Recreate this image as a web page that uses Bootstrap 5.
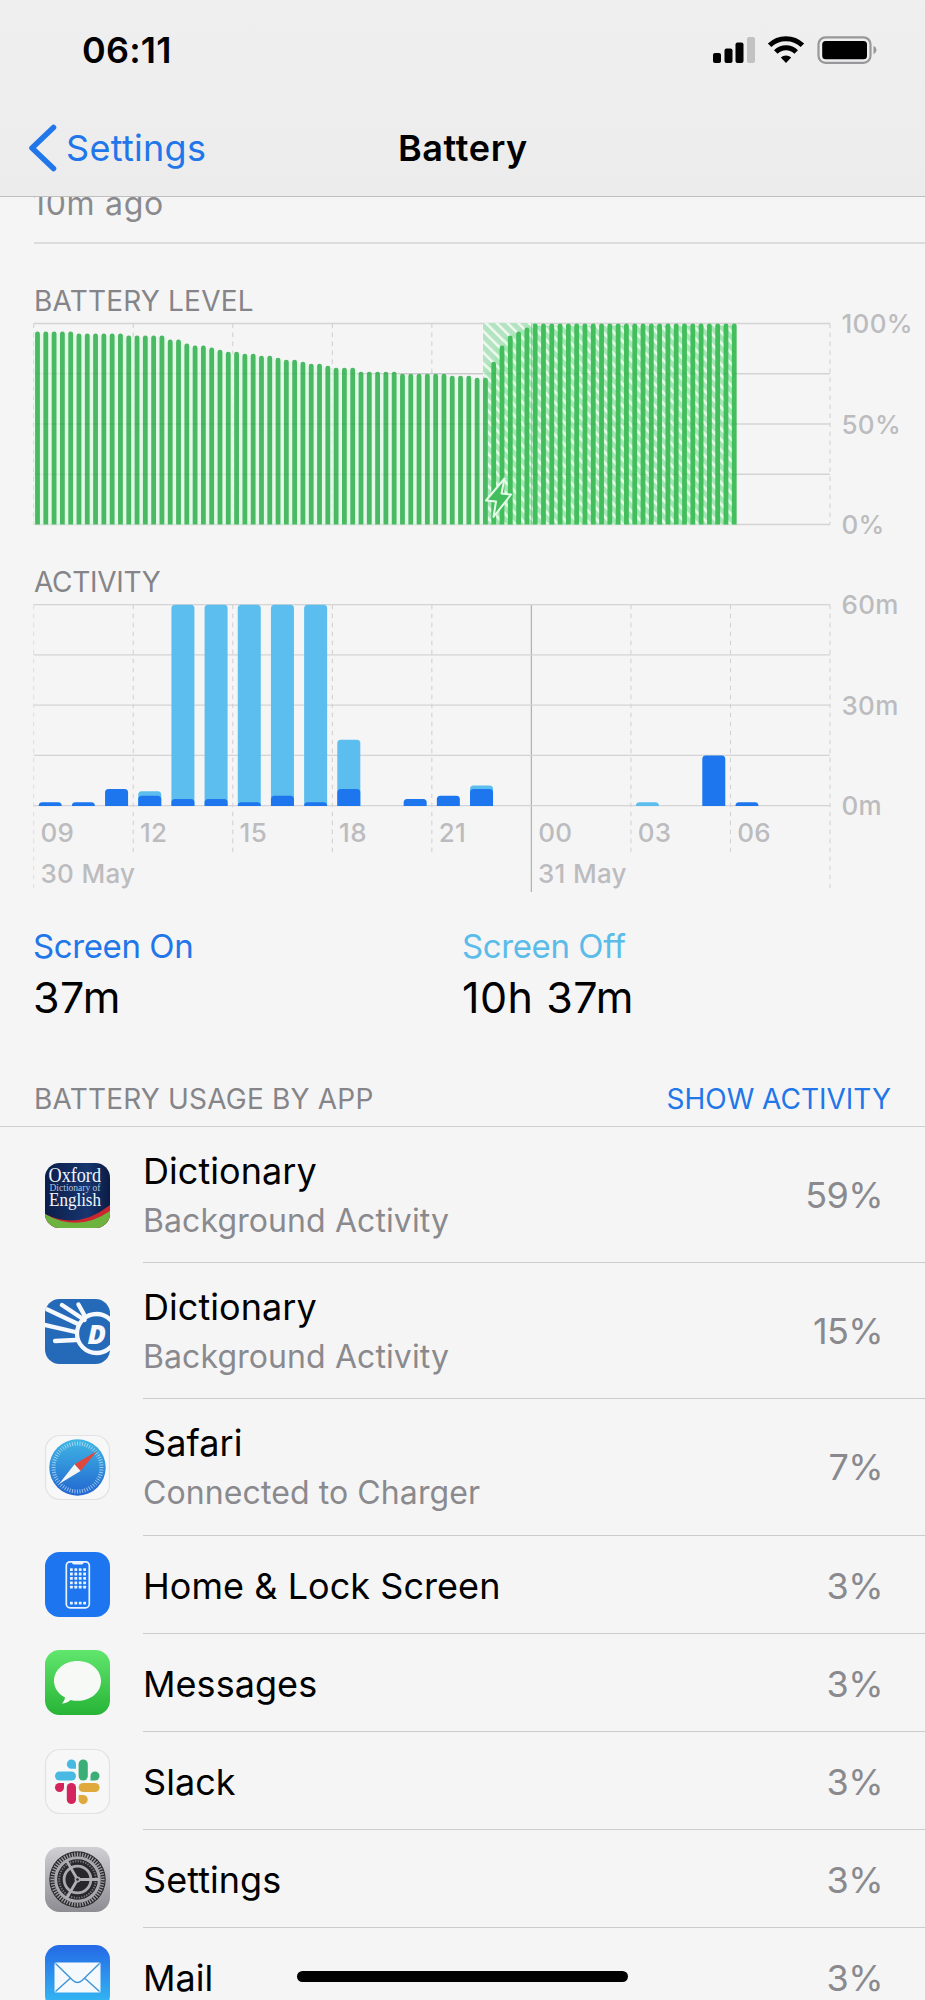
<!DOCTYPE html>
<html lang="en">
<head>
  <meta charset="UTF-8">
  <meta name="viewport" content="width=device-width, initial-scale=1.0">
  <title>Battery</title>

  <link href="https://cdn.jsdelivr.net/npm/bootstrap@5.3.3/dist/css/bootstrap.min.css" rel="stylesheet">

  <style>
    body {
      font-family: Inter, "Liberation Sans", sans-serif;
      background-color: #f5f5f5;
      color: #000;
      height: 2000px;
      overflow: hidden;
    }

    svg {
      display: block;
      flex-shrink: 0;
      overflow: visible;
    }

    /* Top bar */
    .top-bar {
      height: 197px;
      background: linear-gradient(#efeff0, #ececed);
      border-bottom: 1px solid #bfbfc1;
    }

    .status-bar {
      height: 100px;
      padding: 0 48px 0 82px;
    }

    .clock {
      font-size: 36px;
      font-weight: 600;
      letter-spacing: 0.2px;
      line-height: 1;
    }

    .title-bar {
      height: 96px;
      padding-left: 28px;
      font-size: 36px;
      line-height: 1;
    }

    .back-link {
      color: #2176ea;
      width: 370px;
      letter-spacing: 0.3px;
    }

    .back-link svg {
      margin-right: 8px;
    }

    .page-title {
      font-weight: 600;
      letter-spacing: 0.6px;
    }

    /* Last charge line, partly under the top bar */
    .last-charge {
      height: 47px;
      margin-left: 34px;
      overflow: hidden;
      border-bottom: 2px solid #dcdcdd;
      color: #8a8a8e;
      font-size: 32px;
      line-height: 1;
    }

    .last-charge span {
      display: block;
      margin: -9px 0 0 -2px;
      letter-spacing: 0.7px;
    }

    .section-label {
      padding-left: 34px;
      color: #858589;
      font-size: 28px;
      line-height: 34px;
    }

    .level-label {
      margin-top: 40px;
      letter-spacing: 0.2px;
    }

    .activity-label {
      letter-spacing: -0.3px;
    }

    .axis-text {
      font-size: 26px;
      font-weight: 500;
      letter-spacing: 0.3px;
      fill: #bcbcbf;
    }

    /* Totals */
    .totals {
      padding-left: 33px;
    }

    .total-on {
      width: 429px;
    }

    .total-name {
      font-size: 33px;
      line-height: 40px;
      letter-spacing: -0.4px;
    }

    .total-value {
      font-size: 43px;
      line-height: 52px;
      margin-top: 5px;
      letter-spacing: 0.5px;
    }

    .blue-text { color: #2176ea; }
    .sky-text { color: #5bbce9; }

    .usage-head {
      height: 45px;
      margin-top: 59px;
      padding: 0 34px;
      border-bottom: 1px solid #cfcfd1;
      font-size: 28px;
      line-height: 34px;
      color: #858589;
    }

    .usage-title {
      letter-spacing: 0.2px;
    }

    /* App list */
    .app-row {
      height: 98.2px;
      padding-left: 44.5px;
    }

    .app-row.tall {
      height: 136.2px;
    }

    .app-body {
      margin-left: 33.5px;
      padding: 3px 43px 0 0;
      border-bottom: 1px solid #cccccf;
    }

    .tall .app-body {
      padding-top: 1px;
    }

    .app-name {
      font-size: 36px;
      line-height: 44px;
      letter-spacing: 0.05px;
    }

    .app-note {
      font-size: 32px;
      line-height: 40px;
      margin: 8px 0 1px;
      color: #8a8a8e;
      letter-spacing: 0.1px;
    }

    .app-share {
      font-size: 36px;
      line-height: 44px;
      margin-right: -1px;
      color: #8a8a8e;
      letter-spacing: -0.6px;
    }

    .home-bar {
      position: absolute;
      left: 297px;
      top: 1971px;
      width: 331px;
      height: 11px;
      border-radius: 6px;
      background: #000;
    }
  </style>
</head>
<body>

  <!-- Status and title -->
  <header class="top-bar">
    <div class="status-bar d-flex align-items-center justify-content-between">
      <span class="clock">06:11</span>
      <svg width="164" height="28" viewBox="0 0 164 28">
        <rect x="0" y="17" width="8" height="10" rx="2"/>
        <rect x="11.5" y="12.5" width="8" height="14.5" rx="2"/>
        <rect x="22.5" y="6.5" width="8" height="20.5" rx="2"/>
        <rect x="34" y="1" width="8" height="26" rx="2" fill="#c2c2c4"/>
        <g fill="none" stroke="#000" stroke-width="5">
          <path d="M56.6 9.3a23.5 23.5 0 0 1 32.8 0"/>
          <path d="M62.8 16a14.4 14.4 0 0 1 20.4 0"/>
        </g>
        <path d="M73 27l-5.2-5.4a7.6 7.6 0 0 1 10.4 0z"/>
        <rect x="105.5" y="1.3" width="52" height="25.5" rx="7" fill="none" stroke="#98989a" stroke-width="2.2"/>
        <rect x="109.2" y="5" width="44.8" height="18.2" rx="3.5"/>
        <path d="M160.5 9.8q3 1.5 3 4.3t-3 4.3z" fill="#98989a"/>
      </svg>
    </div>
    <div class="title-bar d-flex align-items-center">
      <a class="back-link d-flex align-items-center text-decoration-none" href="#">
        <svg width="30" height="48" viewBox="0 0 30 48">
          <path d="M25.5 3.5L4 24l21.5 20.5" fill="none" stroke="#2176ea" stroke-width="5.5" stroke-linecap="round" stroke-linejoin="round"/>
        </svg>
        Settings
      </a>
      <span class="page-title">Battery</span>
    </div>
  </header>

  <div class="last-charge"><span>10m ago</span></div>

  <main>
    <div class="section-label level-label">BATTERY LEVEL</div>
    <svg id="level-chart" width="925" height="247" viewBox="0 318 925 247"></svg>

    <div class="section-label activity-label">ACTIVITY</div>
    <svg id="activity-chart" width="925" height="327" viewBox="0 599 925 327"></svg>

    <!-- Totals -->
    <div class="totals d-flex">
      <div class="total-on">
        <div class="total-name blue-text">Screen On</div>
        <div class="total-value">37m</div>
      </div>
      <div>
        <div class="total-name sky-text">Screen Off</div>
        <div class="total-value">10h 37m</div>
      </div>
    </div>

    <div class="usage-head d-flex justify-content-between">
      <span class="usage-title">BATTERY USAGE BY APP</span>
      <span class="blue-text">SHOW ACTIVITY</span>
    </div>

    <div id="app-list"></div>
  </main>

  <div class="home-bar"></div>

  <script src="https://cdn.jsdelivr.net/npm/bootstrap@5.3.3/dist/js/bootstrap.bundle.min.js"></script>

  <script>
    // Shared chart geometry
    const left = 33.7;
    const right = 830;
    const step = (right - left) / 8;

    function line(x1, y1, x2, y2, color, extra = '') {
      return `<line x1="${x1}" y1="${y1}" x2="${x2}" y2="${y2}" stroke="${color}" ${extra}/>`;
    }

    function label(x, y, text) {
      return `<text class="axis-text" x="${x}" y="${y}">${text}</text>`;
    }

    // Bar with only its top corners rounded
    function bar(x, top, bottom, w, r, color) {
      r = Math.min(r, bottom - top);
      return `<path fill="${color}" d="M${x} ${bottom}V${top + r}q0 ${-r} ${r} ${-r}h${w - 2 * r}q${r} 0 ${r} ${r}V${bottom}z"/>`;
    }

    // Battery level, one bar per 15 minutes: [value, how many bars]
    const levels = [
      [96, 5], [95, 6], [94, 5], [92, 2], [90, 1], [89, 2], [88, 1], [87, 1], [86, 2], [85, 2],
      [84, 2], [83, 1], [82, 2], [81, 1], [80, 2], [79, 1], [78, 3], [76, 5], [75, 6], [74, 3],
      [73, 2], [81, 1], [89, 1], [94, 1], [96, 1], [98, 1], [100, 25]
    ].flatMap(([value, count]) => Array(count).fill(value));

    function drawLevel() {
      const top = 323.5, bottom = 524.5, pitch = (right - left) / 96;
      let out = `
        <defs>
          <pattern id="hatch" width="7.6" height="7.6" patternUnits="userSpaceOnUse" patternTransform="rotate(-45)">
            <rect width="7.6" height="7.6" fill="#b4e3c1"/>
            <rect width="2.4" height="7.6" fill="#f1faf2"/>
          </pattern>
          <pattern id="hatch-deep" width="7.6" height="7.6" patternUnits="userSpaceOnUse" patternTransform="rotate(-45)">
            <rect width="7.6" height="7.6" fill="#a6e5b4"/>
            <rect width="2.8" height="7.6" fill="#e4fae7"/>
          </pattern>
        </defs>`;

      for (let i = 0; i <= 8; i++) {
        out += line(left + i * step, top, left + i * step, bottom, '#cfcfd1', 'stroke-dasharray="4.5 4.5"');
      }
      for (let i = 0; i <= 4; i++) {
        const y = top + i * (bottom - top) / 4;
        out += line(left, y, right, y, '#d4d4d6', 'stroke-width="1.3"');
      }

      out += `<rect x="483" y="${top - .5}" width="52" height="${bottom - top}" fill="url(#hatch)"/>`;
      levels.forEach((value, i) => {
        const y = bottom - value / 100 * (bottom - top);
        const fill = i < 55 ? '#e3f8e6' : 'url(#hatch-deep)';
        const x = left + (i < 55 ? i : i - .4) * pitch;
        const w = i === 84 ? pitch * .9 : pitch;
        out += `<rect x="${x}" y="${y + 2}" width="${w}" height="${bottom - y - 2}" fill="${fill}"/>`;
      });
      out += line(531.5, top, 531.5, bottom, '#6f9d78', 'stroke-opacity=".45"');
      levels.forEach((value, i) => {
        const y = bottom - value / 100 * (bottom - top);
        out += bar(left + 1.4 + i * pitch, y, bottom, 4.8, 2.3, i < 55 ? '#4ab963' : '#43be5c');
      });
      for (let i = 1; i < 4; i++) {
        const y = top + i * (bottom - top) / 4;
        out += line(left, y, 737, y, '#000', 'stroke-opacity=".06"');
      }

      out += '<path d="M504.5 478.5L486 500.5L496 501.5L493.5 517L511 494.5L501.5 493.5z" fill="#43be5c" stroke="#e6faea" stroke-width="2" stroke-linejoin="round"/>';
      out += label(841.5, 333, '100%') + label(841.5, 433.5, '50%') + label(841.5, 534, '0%');
      document.getElementById('level-chart').innerHTML = out;
    }

    // Minutes per hour slot: [slot, screen on, total]
    const activity = [
      [0, 1, 1], [1, 1, 1], [2, 5, 5], [3, 3, 4.3], [4, 2, 60], [5, 2, 60], [6, 1, 60], [7, 3, 60],
      [8, 1, 60], [9, 5, 19.7], [11, 2, 2], [12, 3, 3], [13, 5, 6], [18, 0, 1], [20, 15, 15], [21, 1, 1]
    ];

    function drawActivity() {
      const top = 604.7, bottom = 805.7, pitch = (right - left) / 24;
      let out = '';

      for (let i = 0; i <= 8; i++) {
        const x = left + i * step;
        const end = i === 0 || i === 8 ? 892 : 856;
        if (i === 5) {
          out += line(x, top, x, 892, '#b4b4b6', 'stroke-width="1.3"');
        } else {
          out += line(x, top, x, end, i === 0 ? '#dededf' : '#cfcfd1', 'stroke-dasharray="4.5 4.5"');
        }
      }
      for (let i = 0; i <= 4; i++) {
        const y = top + i * (bottom - top) / 4;
        out += line(left, y, right, y, '#d4d4d6', 'stroke-width="1.3"');
      }

      activity.forEach(([slot, on, total]) => {
        const x = left + 5 + slot * pitch;
        const y = minutes => bottom - Math.max(minutes / 60 * (bottom - top), 3.5);
        if (total > on) out += bar(x, y(total), bottom + .3, 23, 3.5, '#5bbeee');
        if (on > 0) out += bar(x, y(on), bottom + .3, 23, 3.5, '#1d76ee');
      });

      ['09', '12', '15', '18', '21', '00', '03', '06'].forEach((hour, i) => {
        out += label(left + i * step + 6.8, 842, hour);
      });
      out += label(40.5, 883, '30 May') + label(538, 883, '31 May');
      out += label(841.5, 614, '60m') + label(841.5, 714.5, '30m') + label(841.5, 815, '0m');
      document.getElementById('activity-chart').innerHTML = out;
    }

    // Ticks round the middle of a tile
    function ring(r, count, len, width, color) {
      let out = '';
      for (let i = 0; i < count; i++) {
        out += `<path d="M32.5 ${32.5 - r}v${len}" stroke="${color}" stroke-width="${width}" transform="rotate(${i * 360 / count} 32.5 32.5)"/>`;
      }
      return out;
    }

    function tile(fill, body, extra = '') {
      return `<svg width="65" height="65" viewBox="0 0 65 65">
        <clipPath id="tile-clip"><rect width="65" height="65" rx="14.5"/></clipPath>
        <g clip-path="url(#tile-clip)"><rect width="65" height="65" fill="${fill}"/>${body}</g>${extra}</svg>`;
    }

    const outline = '<rect x=".5" y=".5" width="64" height="64" rx="14.5" fill="none" stroke="#e2e2e4" stroke-width="1.2"/>';

    let dots = '';
    [0, 1, 2, 3, 4, 7.6].forEach(row => {
      for (let col = 0; col < 4; col++) {
        dots += `<rect x="${25 + col * 4.4}" y="${16.2 + row * 4.4}" width="2.8" height="2.8" rx=".4" fill="#e9f2ff"/>`;
      }
    });

    const icons = {
      oxford: tile('url(#navy)', `
        <defs><linearGradient id="navy" x1="0" x2="1"><stop stop-color="#0c1e49"/><stop offset=".65" stop-color="#17356f"/><stop offset="1" stop-color="#0a1c44"/></linearGradient></defs>
        <path d="M0 51Q33 67.500 65 42V65H0z" fill="#cb2630"/>
        <path d="M0 51Q33 70 65 48V65H0z" fill="#6cb43f"/>
        <g fill="#f3f5fa" font-family="Liberation Serif, serif" lengthAdjust="spacingAndGlyphs">
          <text x="3.5" y="18.5" font-size="20" textLength="52.5" lengthAdjust="spacingAndGlyphs">Oxford</text>
          <text x="4.5" y="28.3" font-size="10" textLength="51" fill="#b4c4de" lengthAdjust="spacingAndGlyphs">Dictionary of</text>
          <text x="4" y="43" font-size="19" textLength="52" lengthAdjust="spacingAndGlyphs">English</text>
        </g>`),
      rays: tile('#2569b9', `
        <g fill="none" stroke="#f5f8fc" stroke-width="4.3" stroke-linecap="round">
          <circle cx="51.5" cy="34.5" r="19.5"/>
          <path d="M10 42l21-1M-2 25.5L30.5 33M-2 8.5L34 25.5M17 6L39.5 21M33.5 5.5L39 15.5"/>
        </g>
        <text x="42.5" y="44.5" font-size="27" font-weight="800" font-style="italic" fill="#f5f8fc" font-family="Open Sans, sans-serif">D</text>`),
      safari: tile('#f8f8f9', `
        <defs><linearGradient id="sea" x2="0" y2="1"><stop stop-color="#3fb7e4"/><stop offset="1" stop-color="#2265d0"/></linearGradient></defs>
        <circle cx="32.5" cy="32.5" r="28.2" fill="url(#sea)"/>
        ${ring(26, 60, 4, .7, '#c9e4f6')}
        <path d="M52 16L29.5 29.3L35.5 36z" fill="#e0473f"/>
        <path d="M14 49L29.5 29.3L35.5 36z" fill="#f3f5f7"/>`, outline),
      home: tile('#1d76f0', `
        <rect x="21.3" y="9.8" width="23" height="46" rx="3.8" fill="none" stroke="#e9f2ff" stroke-width="1.7"/>
        <path d="M27 9.5h11.6v1q0 2-2 2h-7.6q-2 0-2-2z" fill="#e9f2ff"/>${dots}`),
      messages: tile('url(#lime)', `
        <defs><linearGradient id="lime" x2="0" y2="1"><stop stop-color="#61e66e"/><stop offset="1" stop-color="#27b436"/></linearGradient></defs>
        <path d="M32.5 11C19.500 11 9 19.600 9 31c0 7 4.300 13 11 16.500c-.3 2.500-1.300 4.300-3.300 6c3.800-.2 6.600-1.500 8.800-3.600c2.300.6 4.600.9 7 .9C45.500 50.800 56 42.400 56 31S45.500 11 32.500 11z" fill="#f7f9f7"/>`),
      slack: tile('#f7f7f8', `
        <g fill="#47b9e2"><rect x="10" y="22.5" width="21" height="9" rx="4.5"/><path d="M31 19.7h-4.500a4.600 4.600 0 1 1 4.500-4.600z"/></g>
        <g fill="#3bae78"><rect x="33.6" y="10.5" width="9.2" height="21" rx="4.6"/><path d="M45.500 31.500V27a4.500 4.500 0 1 1 4.500 4.500z"/></g>
        <g fill="#d3245e"><rect x="21.8" y="34" width="9.2" height="21" rx="4.6"/><path d="M19 34v4.500A4.500 4.500 0 1 1 14.500 34z"/></g>
        <g fill="#e0a93c"><rect x="33.6" y="34" width="21" height="9" rx="4.5"/><path d="M33.600 46h4.500a4.600 4.600 0 1 1-4.500 4.600z"/></g>`, outline),
      settings: tile('url(#steel)', `
        <defs><linearGradient id="steel" x2="0" y2="1"><stop stop-color="#cfcfd4"/><stop offset="1" stop-color="#8d8d93"/></linearGradient></defs>
        <circle cx="32.5" cy="32.5" r="28.2" fill="#28282b"/>
        ${ring(27.2, 60, 4, 1.3, '#a0a0a5')}
        <circle cx="32.5" cy="32.5" r="21.8" fill="none" stroke="#a9a9ae" stroke-width="3"/>
        <circle cx="32.5" cy="32.5" r="18.3" fill="none" stroke="#77777c" stroke-width="2" stroke-dasharray="1.3 1.3"/>
        <circle cx="32.5" cy="32.5" r="13.4" fill="none" stroke="#a9a9ae" stroke-width="2.8"/>
        <path d="M32.5 32.5H54M32.5 32.5L21.7 13.9M32.5 32.5L21.7 51.1" stroke="#b0b0b5" stroke-width="2.8"/>
        <circle cx="32.5" cy="32.5" r="3" fill="#aaaaaf"/><circle cx="32.5" cy="32.5" r="1.3" fill="#28282b"/>`),
      mail: tile('url(#azure)', `
        <defs><linearGradient id="azure" x2="0" y2="1"><stop stop-color="#2569e6"/><stop offset="1" stop-color="#35c0f4"/></linearGradient></defs>
        <rect x="9.5" y="17.5" width="46" height="30" rx="1.5" fill="#f5f9fc"/>
        <path d="M10.5 18.5L28 35.5q4.5 4 9 0L54.5 18.5M10.5 46.5L25.5 33M54.5 46.5L39.5 33" fill="none" stroke="#3f96da" stroke-width="1.5"/>`)
    };

    const apps = [
      { icon: 'oxford', name: 'Dictionary', note: 'Background Activity', share: 59 },
      { icon: 'rays', name: 'Dictionary', note: 'Background Activity', share: 15 },
      { icon: 'safari', name: 'Safari', note: 'Connected to Charger', share: 7 },
      { icon: 'home', name: 'Home &amp; Lock Screen', share: 3 },
      { icon: 'messages', name: 'Messages', share: 3 },
      { icon: 'slack', name: 'Slack', share: 3 },
      { icon: 'settings', name: 'Settings', share: 3 },
      { icon: 'mail', name: 'Mail', share: 3 }
    ];

    drawLevel();
    drawActivity();

    document.getElementById('app-list').innerHTML = apps.map(app => `
      <div class="app-row d-flex align-items-center ${app.note ? 'tall' : ''}">
        ${icons[app.icon]}
        <div class="app-body d-flex flex-grow-1 h-100 align-items-center justify-content-between">
          <div>
            <div class="app-name">${app.name}</div>
            ${app.note ? `<div class="app-note">${app.note}</div>` : ''}
          </div>
          <div class="app-share">${app.share}%</div>
        </div>
      </div>`).join('');
  </script>
</body>
</html>
